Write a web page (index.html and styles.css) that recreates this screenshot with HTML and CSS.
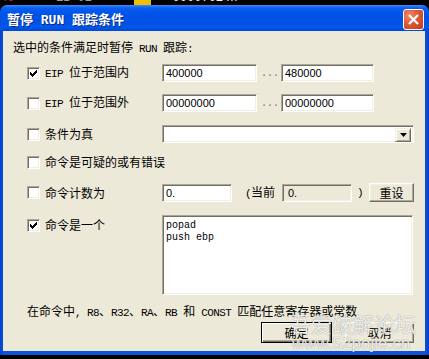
FILE: index.html
```html
<!DOCTYPE html>
<html>
<head>
<meta charset="utf-8">
<link rel="stylesheet" href="styles.css">
</head>
<body>
<div class="strip">
  <div class="strip-inner">
    <span class="s-red">40</span><span class="s-grey">     EB 02</span><span class="s-gap"></span><span class="s-yel">  </span><span class="s-white">   00007014h</span>
  </div>
</div>
<div class="window">
  <div class="titlebar">
    <span class="title">暂停<span class="en"> RUN </span>跟踪条件</span>
    <span class="close">
      <svg width="20" height="20" viewBox="0 0 20 20"><path d="M6 6 L14 14 M14 6 L6 14" stroke="#fff" stroke-width="2.2" stroke-linecap="square"/></svg>
    </span>
  </div>
  <div class="client">
    <div class="header">选中的条件满足时暂停<span class="en"> RUN </span>跟踪<span class="en">:</span></div>

    <div class="row r1">
      <label class="lbl"><span class="cb"><svg class="chk" viewBox="1 1 11 11" width="11" height="11"><path d="M9 3h1v1h-1z M8 4h2v1h-2z M3 5h1v1h-1z M7 5h3v1h-3z M3 6h2v1h-2z M6 6h3v1h-3z M3 7h5v1h-5z M4 8h3v1h-3z M5 9h1v1h-1z" fill="#000" shape-rendering="crispEdges"/></svg></span><span><span class="en">EIP </span>位于范围内</span></label>
      <span class="edit w95">400000</span>
      <span class="dots">...</span>
      <span class="edit w93">480000</span>
    </div>

    <div class="row r2">
      <label class="lbl"><span class="cb"></span><span><span class="en">EIP </span>位于范围外</span></label>
      <span class="edit w95">00000000</span>
      <span class="dots">...</span>
      <span class="edit w93">00000000</span>
    </div>

    <div class="row r3">
      <label class="lbl"><span class="cb"></span><span>条件为真</span></label>
      <span class="combo"><span class="drop"><svg width="7" height="4" viewBox="0 0 7 4"><path d="M0 0h7l-3.5 4z" fill="#000"/></svg></span></span>
    </div>

    <div class="row r4">
      <label class="lbl wide"><span class="cb"></span><span>命令是可疑的或有错误</span></label>
    </div>

    <div class="row r5">
      <label class="lbl"><span class="cb"></span><span>命令计数为</span></label>
      <span class="edit w70">0.</span>
      <span class="cur"><span class="en">(</span>当前</span>
      <span class="edit w70 ro">0.</span>
      <span class="paren en">)</span>
      <span class="btn reset">重设</span>
    </div>

    <div class="row r6">
      <label class="lbl top"><span class="cb"><svg class="chk" viewBox="1 1 11 11" width="11" height="11"><path d="M9 3h1v1h-1z M8 4h2v1h-2z M3 5h1v1h-1z M7 5h3v1h-3z M3 6h2v1h-2z M6 6h3v1h-3z M3 7h5v1h-5z M4 8h3v1h-3z M5 9h1v1h-1z" fill="#000" shape-rendering="crispEdges"/></svg></span><span>命令是一个</span></label>
      <div class="memo">popad
push ebp</div>
    </div>

    <div class="footer">在命令中<span class="en">, R8</span>、<span class="en">R32</span>、<span class="en">RA</span>、<span class="en">RB </span>和<span class="en"> CONST </span>匹配任意寄存器或常数</div>

    <div class="buttons">
      <span class="btn default">确定</span>
      <span class="btn cancel">取消</span>
    </div>
  </div>
  <div class="wm">
    <div class="wm1">吾爱破解论坛</div>
    <div class="wm2">www.52pojie.cn</div>
  </div>
</div>
</body>
</html>
```

FILE: styles.css
```css
html, body {
  margin: 0;
  padding: 0;
}
body {
  background: #000;
  width: 429px;
  height: 359px;
  overflow: hidden;
  font-family: "Noto Sans CJK SC", sans-serif;
  font-size: 12px;
  color: #000;
}
.en {
  font-family: "Liberation Mono", monospace;
  font-size: 11px;
  letter-spacing: -0.6px;
  white-space: pre;
}
.strip {
  height: 5px;
  overflow: hidden;
}
.strip-inner {
  margin-top: -9px;
  display: flex;
  font-family: "Liberation Mono", monospace;
  font-size: 12px;
  line-height: 14px;
  white-space: pre;
}
.s-red { color: #e02020; width: 20px; }
.s-grey { color: #a0a0a0; }
.s-gap { width: 42px; }
.s-yel { background: #f0c000; width: 17px; }
.s-white { color: #fff; }

.window {
  position: relative;
  height: 350px;
  display: flex;
  flex-direction: column;
  border-radius: 7px 7px 0 0;
  background: linear-gradient(to right, #0842c8 0, #0a52e0 3px, #0a52e0 calc(100% - 4px), #0840c4 100%);
  overflow: hidden;
}
.titlebar {
  height: 26px;
  flex: none;
  display: flex;
  align-items: center;
  justify-content: space-between;
  padding: 0 5px 0 7px;
  background: linear-gradient(#3a8cff 0, #0a5ef0 3px, #0054e8 8px, #0050e4 16px, #0158ea 22px, #0048d8 26px);
  border-radius: 7px 7px 0 0;
}
.title {
  color: #fff;
  font-weight: bold;
  font-size: 13px;
  line-height: 16px;
  margin-top: 4px;
  text-shadow: 1px 1px 0 #0a2a80;
}
.title .en {
  font-size: 13px;
  letter-spacing: 0;
  font-weight: bold;
}
.close {
  width: 19px;
  height: 19px;
  margin-top: 2px;
  border: 1px solid #fff;
  border-radius: 3px;
  background: radial-gradient(circle at 30% 30%, #f08a6c 0, #dd5a36 45%, #c2381a 100%);
  display: flex;
  align-items: center;
  justify-content: center;
}
.close svg { width: 19px; height: 19px; }

.client {
  flex: 1;
  margin: 0 4px 4px 3px;
  background: #ece9d8;
  padding: 8px 0 0 10px;
  display: flex;
  flex-direction: column;
}
.header {
  line-height: 16px;
  height: 16px;
}
.row {
  display: flex;
  align-items: center;
  height: 18px;
  margin-left: 14px;
}
.r1 { margin-top: 9px; }
.r2 { margin-top: 12px; }
.r3 { margin-top: 13px; }
.r4 { margin-top: 10px; }
.r5 { margin-top: 12px; height: 19px; }
.r6 { margin-top: 13px; height: 80px; align-items: flex-start; }

.lbl {
  width: 135px;
  flex: none;
  display: flex;
  align-items: center;
  gap: 5px;
  line-height: 16px;
}
.lbl.wide { width: auto; }
.lbl.top { margin-top: 2px; }

.cb {
  width: 11px;
  height: 11px;
  flex: none;
  background: #fff;
  border: 1px solid;
  border-color: #aca899 #fff #fff #aca899;
  box-shadow: inset 1px 1px 0 #716f64, inset -1px -1px 0 #f1efe2;
  display: flex;
}
.chk { display: block; }

.edit {
  box-sizing: border-box;
  height: 18px;
  background: #fff;
  border: 1px solid;
  border-color: #aca899 #fff #fff #aca899;
  box-shadow: inset 1px 1px 0 #716f64, inset -1px -1px 0 #f1efe2;
  font-family: "Liberation Sans", sans-serif;
  font-size: 11px;
  line-height: 16px;
  padding-left: 3px;
  flex: none;
}
.w95 { width: 95px; }
.w93 { width: 93px; }
.w70 { width: 70px; }
.edit.ro { background: #ece9d8; padding-left: 5px; }
.dots {
  width: 24px;
  flex: none;
  color: #707070;
  font-family: "Liberation Mono", monospace;
  font-size: 10px;
  padding-left: 4px;
  box-sizing: border-box;
  line-height: 16px;
  margin-top: 2px;
}
.combo {
  box-sizing: border-box;
  width: 252px;
  height: 18px;
  background: #fff;
  border: 1px solid;
  border-color: #aca899 #fff #fff #aca899;
  box-shadow: inset 1px 1px 0 #716f64, inset -1px -1px 0 #f1efe2;
  display: flex;
  justify-content: flex-end;
  padding: 2px 2px 2px 0;
}
.drop {
  box-sizing: border-box;
  width: 16px;
  height: 14px;
  background: #ece9d8;
  border: 1px solid;
  border-color: #f1efe2 #716f64 #716f64 #f1efe2;
  box-shadow: inset 1px 1px 0 #fff, inset -1px -1px 0 #aca899;
  display: flex;
  align-items: center;
  justify-content: center;
}
.cur {
  margin-left: 13px;
  width: 37px;
  flex: none;
  line-height: 16px;
}
.paren {
  margin-left: 5px;
  width: 12px;
  flex: none;
}
.btn {
  box-sizing: border-box;
  display: flex;
  align-items: center;
  justify-content: center;
  background: #ece9d8;
  border: 1px solid;
  border-color: #fff #716f64 #716f64 #fff;
  box-shadow: inset -1px -1px 0 #aca899, inset 1px 1px 0 #f1efe2;
  line-height: 16px;
  flex: none;
}
.reset {
  width: 45px;
  height: 19px;
}
.memo {
  box-sizing: border-box;
  width: 251px;
  height: 80px;
  background: #fff;
  border: 1px solid;
  border-color: #aca899 #fff #fff #aca899;
  box-shadow: inset 1px 1px 0 #716f64, inset -1px -1px 0 #f1efe2;
  font-family: "Liberation Mono", monospace;
  font-size: 10px;
  line-height: 12px;
  padding: 4px 0 0 3px;
  white-space: pre;
}
.footer {
  margin-top: 8px;
  margin-left: 14px;
  line-height: 16px;
  height: 16px;
}
.buttons {
  margin-top: 3px;
  display: flex;
  justify-content: flex-end;
  gap: 13px;
  padding-right: 11px;
}
.buttons .btn { height: 21px; }
.default {
  width: 71px;
  border: 1px solid #000;
  box-shadow: inset 1px 1px 0 #fff, inset -1px -1px 0 #716f64, inset -2px -2px 0 #aca899;
}
.cancel { width: 69px; }

.wm {
  position: absolute;
  left: 290px;
  top: 306px;
  color: rgba(255, 255, 255, 0.85);
  text-shadow: 0 0 1px rgba(80, 80, 80, 0.7);
  pointer-events: none;
}
.wm1 {
  font-size: 21px;
  line-height: 24px;
}
.wm2 {
  font-family: "Liberation Sans", sans-serif;
  font-size: 17px;
  line-height: 18px;
  margin-left: 2px;
}
```
